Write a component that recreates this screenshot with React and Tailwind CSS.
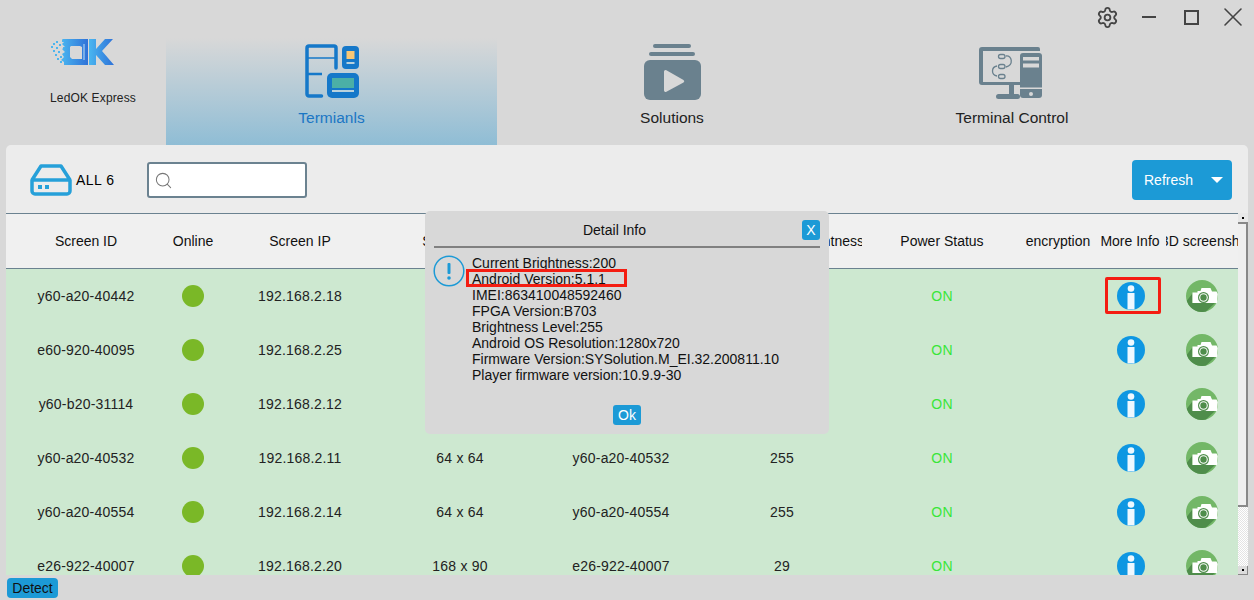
import React from 'react';
import { Settings, Search, X } from 'lucide-react';

const columns = [
  { label: 'Screen ID', width: 'w-[160px]' },
  { label: 'Online', width: 'w-[54px]' },
  { label: 'Screen IP', width: 'w-[160px]' },
  { label: 'Screen Size', width: 'w-[160px]' },
  { label: 'Screen Name', width: 'w-[162px]' },
  { label: 'Screen Brightness', width: 'w-[160px]', className: 'justify-end! pr-0', inner: 'mr-[-2px]' },
  { label: 'Power Status', width: 'w-[160px]' },
  { label: 'encryption', width: 'w-[72px]' },
  { label: 'More Info', width: 'w-[72px]' },
  { label: '3D screenshot', width: 'w-[72px]', inner: 'ml-[8px]' },
];

const rows = [
  { id: 'y60-a20-40442', ip: '192.168.2.18', size: '64 x 64', brightness: '255' },
  { id: 'e60-920-40095', ip: '192.168.2.25', size: '64 x 64', brightness: '255' },
  { id: 'y60-b20-31114', ip: '192.168.2.12', size: '64 x 64', brightness: '255' },
  { id: 'y60-a20-40532', ip: '192.168.2.11', size: '64 x 64', brightness: '255' },
  { id: 'y60-a20-40554', ip: '192.168.2.14', size: '64 x 64', brightness: '255' },
  { id: 'e26-922-40007', ip: '192.168.2.20', size: '168 x 90', brightness: '29' },
];

const details = [
  'Current Brightness:200',
  'Android Version:5.1.1',
  'IMEI:863410048592460',
  'FPGA Version:B703',
  'Brightness Level:255',
  'Android OS Resolution:1280x720',
  'Firmware Version:SYSolution.M_EI.32.200811.10',
  'Player firmware version:10.9.9-30',
];

const LogoIcon = () => (
  <svg width="64" height="26" viewBox="0 0 64 26">
    <defs>
      <linearGradient id="logoFill" x1="0" x2="1" y1="0" y2="0">
        <stop offset="0" stopColor="#4ab6f0" />
        <stop offset="1" stopColor="#2f72d8" />
      </linearGradient>
    </defs>
    {[[1, 7], [3, 4], [3, 11], [6, 2], [6, 8], [5, 15], [8, 12], [9, 5], [7, 19], [10, 17], [10, 22], [13, 20], [14, 24], [12, 1], [13, 8], [15, 13]].map(([x, y], i) => (
      <rect key={i} x={x} y={y} width="2" height="2" fill="#4db5ee" />
    ))}
    <path fillRule="evenodd" d="M12 0h26v26H14v-3l-3-2 3-3-2-3 3-2-3-3 3-2-3-3 2-2zM20 8v10l2 2h10V8l-2-1H21z" fill="url(#logoFill)" />
    <path d="M39 0h7v10l9-10h8L52 12l12 14h-9l-9-10v10h-7z" fill="url(#logoFill)" />
    <path d="M34 5v16" stroke="#bfe0f5" strokeWidth="1" />
  </svg>
);

const TerminalsIcon = () => (
  <svg width="54" height="54" viewBox="0 0 54 54" fill="none">
    <path d="M16.500 52H4a2 2 0 0 1-2-2V4a2 2 0 0 1 2-2h25a2 2 0 0 1 2 2v20" stroke="#1578c9" strokeWidth="3.500" strokeLinecap="round" />
    <path d="M3 14h27" stroke="#1578c9" strokeWidth="1.500" />
    <path d="M3 30h14" stroke="#1578c9" strokeWidth="2.500" />
    <rect x="37" y="2" width="17" height="23" rx="4" fill="#1578c9" />
    <rect x="41.500" y="7" width="8" height="8" fill="#f8c775" />
    <rect x="41.500" y="18" width="8" height="2" fill="#b9d2dd" />
    <rect x="22" y="29" width="32" height="25" rx="5" fill="#1578c9" />
    <rect x="27" y="34" width="22" height="10" fill="#4bafa6" />
    <rect x="27" y="46" width="22" height="2" fill="#b9d2dd" />
  </svg>
);

const SolutionsIcon = () => (
  <svg width="58" height="58" viewBox="0 0 58 58">
    <rect x="10" y="0" width="38" height="4" rx="2" fill="#6a818e" />
    <rect x="6" y="8" width="46" height="4" rx="2" fill="#6a818e" />
    <rect x="1" y="16" width="57" height="40" rx="6" fill="#6a818e" />
    <path d="M21 27.500a1.500 1.500 0 0 1 2.400-1.200L40.500 36a1.500 1.500 0 0 1 0 2.400L23.400 47.700a1.500 1.500 0 0 1-2.400-1.200z" fill="#d8d8d8" />
  </svg>
);

const ControlIcon = () => (
  <svg width="66" height="56" viewBox="0 0 66 56" fill="none">
    <path d="M41 38H4V7h57V5a2 2 0 0 0-2-2H3a3 3 0 0 0-3 3v32a3 3 0 0 0 3 3h38z" fill="#6a818e" />
    <rect x="30" y="41" width="5" height="10" fill="#6a818e" />
    <rect x="17" y="50" width="24" height="5" rx="2.500" fill="#6a818e" />
    <rect x="41" y="9" width="22" height="45" rx="3" fill="#6a818e" />
    <rect x="44" y="13" width="16" height="3.500" fill="#d8d8d8" />
    <rect x="44" y="19.500" width="16" height="4" fill="#d8d8d8" />
    <rect x="40" y="43.500" width="24" height="1.500" fill="#d8d8d8" />
    <circle cx="52" cy="50" r="2" fill="#d8d8d8" />
    <g stroke="#6a818e" strokeWidth="1.300">
      <rect x="19.500" y="10.500" width="6.500" height="4" rx="2" />
      <rect x="19.500" y="20.500" width="6.500" height="4" rx="2" />
      <rect x="19.500" y="30.500" width="6.500" height="4" rx="2" />
      <path d="M27 12c6-1 8 9 0 11M18 22c-6 1-6 9 0 10" />
    </g>
  </svg>
);

const DriveIcon = () => (
  <svg width="43" height="33" viewBox="0 0 43 33" fill="none">
    <path d="M2 16 11 2h20l9 14M2 16h38v11a3 3 0 0 1-3 3H5a3 3 0 0 1-3-3z" stroke="#26a0d9" strokeWidth="3.500" strokeLinejoin="round" />
    <rect x="8" y="21" width="4" height="4" fill="#26a0d9" />
    <rect x="15" y="21" width="4" height="4" fill="#26a0d9" />
  </svg>
);

const InfoDot = () => (
  <svg width="28" height="28" viewBox="0 0 28 28">
    <circle cx="14" cy="14" r="14" fill="#0e97e2" />
    <circle cx="14" cy="6.500" r="3.300" fill="#eef8ff" />
    <rect x="10.500" y="11" width="7" height="16.500" fill="#eef8ff" />
  </svg>
);

const CameraDot = () => (
  <svg width="32" height="32" viewBox="0 0 32 32">
    <circle cx="16" cy="16" r="16" fill="#73b767" />
    <path d="M6 14 0.800 20.800A16 16 0 0 0 20 31.500L29 23H6z" fill="#4f8d4b" />
    <path d="M6.500 12.500h5V11h3l1-3h9l1.500 3.500h4.500L31.800 14 31 23H6.500z" fill="#fff" />
    <circle cx="17.500" cy="17.500" r="5.500" fill="#4f8d4b" />
    <circle cx="17.500" cy="17.500" r="4.300" fill="#fff" />
    <circle cx="17.500" cy="17.500" r="3.200" fill="#4f8d4b" />
  </svg>
);

const NavTab = ({ label, active, width, children }) => (
  <div
    className={`${width} h-[107px] flex flex-col items-center ${active ? 'bg-gradient-to-b from-[#d8d8d8] to-[#8fbdd5] text-[#1b76c4]' : 'text-[#222]'}`}
  >
    <div className="h-[70px] pt-[6px] flex items-start justify-center">{children}</div>
    <span className="text-[15.5px] leading-[20px]">{label}</span>
  </div>
);

const Cell = ({ width, children, className = '' }) => (
  <div className={`${width} shrink-0 h-full flex items-center justify-center overflow-hidden whitespace-nowrap ${className}`}>
    {children}
  </div>
);

const DeviceRow = ({ row }) => (
  <div className="h-[54px] flex text-sm text-[#222] tracking-[0.2px]">
    <Cell width={columns[0].width}>{row.id}</Cell>
    <Cell width={columns[1].width}><span className="w-[22px] h-[22px] rounded-full bg-[#7ab827]" /></Cell>
    <Cell width={columns[2].width}>{row.ip}</Cell>
    <Cell width={columns[3].width}>{row.size}</Cell>
    <Cell width={columns[4].width}>{row.id}</Cell>
    <Cell width={columns[5].width}>{row.brightness}</Cell>
    <Cell width={columns[6].width} className="text-[#39e639]">ON</Cell>
    <Cell width={columns[7].width} />
    <Cell width={columns[8].width} className="pl-px"><InfoDot /></Cell>
    <Cell width={columns[9].width}><CameraDot /></Cell>
  </div>
);

const DetailDialog = () => (
  <div className="absolute left-[419px] top-[66px] w-[404px] h-[223px] rounded-[5px] bg-[#d8d8d8] px-[8px] text-sm text-[#111]">
    <div className="h-[37px] flex items-center justify-center relative border-b-2 border-[#808080] pt-[3px] pr-[25px] mx-px">
      Detail Info
      <span className="absolute right-0 top-[9px] w-[18px] h-[20px] rounded-[3px] bg-[#1c9ad6] text-white flex items-center justify-center">X</span>
    </div>
    <div className="flex mt-[7px]">
      <svg width="32" height="32" viewBox="0 0 32 32" className="shrink-0">
        <circle cx="16" cy="16" r="14.800" fill="none" stroke="#1c9ad6" strokeWidth="1.500" />
        <rect x="14.500" y="8" width="3" height="11" rx="1" fill="#1c9ad6" />
        <circle cx="16" cy="23" r="1.800" fill="#1c9ad6" />
      </svg>
      <div className="ml-[7px] leading-[16px] relative">
        {details.map((line) => (
          <div key={line}>{line}</div>
        ))}
        <span className="absolute left-[-6px] top-[14px] w-[161px] h-[18px] border-[3px] border-[#f41d12]" />
      </div>
    </div>
    <div className="flex justify-center mt-[22px]">
      <span className="w-[28px] h-[20px] rounded-[3px] bg-[#1c9ad6] text-white flex items-center justify-center">Ok</span>
    </div>
  </div>
);

const Scrollbar = () => (
  <div className="w-[10px] h-[362px] mt-[-1px] flex flex-col bg-white bg-[repeating-conic-gradient(#e4e4e4_0_25%,#ffffff_0_50%)] bg-[length:2px_2px]">
    <div className="h-[9px] shrink-0 bg-[#e8e8e8] flex items-center justify-center">
      <span className="w-[2px] h-[2px] bg-black" />
    </div>
    <div className="h-[285px] shrink-0 bg-[#efefef] border-t-2 border-r-2 border-b-2 border-[#888]" />
    <div className="flex-1" />
    <div className="h-[9px] shrink-0 bg-[#dcdcdc] border-r border-b border-[#888] flex items-center justify-center">
      <span className="w-[2px] h-[2px] bg-black" />
    </div>
  </div>
);

export default function App() {
  return (
    <div className="w-[1254px] h-[600px] overflow-hidden flex flex-col bg-[#d8d8d8] font-['Liberation_Sans',Arial,sans-serif]">
      <div className="h-[145px] shrink-0 relative flex items-end">
        <div className="w-[166px] h-[107px] flex flex-col items-start pl-[50px]">
          <div className="h-[26px] mt-px"><LogoIcon /></div>
          <span className="text-xs text-[#222] mt-[25px] whitespace-nowrap tracking-[0.15px]">LedOK Express</span>
        </div>
        <NavTab label="Termianls" active width="w-[331px]"><TerminalsIcon /></NavTab>
        <NavTab label="Solutions" width="w-[350px]"><SolutionsIcon /></NavTab>
        <NavTab label="Terminal Control" width="w-[330px]"><ControlIcon /></NavTab>
        <div className="absolute right-[5px] top-[1px] flex items-center text-[#444]">
          <Settings size={23} strokeWidth={1.900} />
          <span className="ml-[23px] w-[14px] h-[2px] bg-[#444]" />
          <span className="ml-[28px] w-[15px] h-[15px] border-2 border-[#444]" />
          <X size={32} strokeWidth={1.200} className="ml-[18px]" />
        </div>
      </div>

      <div className="h-[430px] shrink-0 mx-[6px] rounded-t-[5px] bg-[#ececec] flex flex-col overflow-hidden relative">
        <div className="h-[69px] shrink-0 flex items-center border-b border-[#6b8290] pt-[2px] pl-[24px] pr-[16px]">
          <DriveIcon />
          <span className="ml-[3px] text-sm text-black tracking-[0.5px]">ALL 6</span>
          <div className="ml-[32px] w-[160px] h-[36px] bg-white border-2 border-[#6b8290] rounded-[3px] flex items-center pl-[5px]">
            <Search size={19} strokeWidth={1.300} className="text-[#777]" />
          </div>
          <div className="ml-auto w-[100px] h-[40px] rounded-[4px] bg-[#1c9ad6] text-white text-sm flex items-center pl-[12px]">
            Refresh
            <span className="ml-[18px] border-x-[6.500px] border-x-transparent border-t-[6.500px] border-t-white" />
          </div>
        </div>

        <div className="flex-1 flex min-h-0">
          <div className="w-[1232px] shrink-0">
            <div className="h-[55px] flex bg-[#f0f0f0] border-b border-[#6b8290] text-sm text-[#111]">
              {columns.map((col) => (
                <Cell key={col.label} width={col.width} className={col.className}>
                  <span className={col.inner}>{col.label}</span>
                </Cell>
              ))}
            </div>
            <div className="bg-[#cde8d0]">
              {rows.map((row) => (
                <DeviceRow key={row.id} row={row} />
              ))}
            </div>
          </div>
          <Scrollbar />
        </div>

        <span className="absolute left-[1099px] top-[132px] w-[56px] h-[37px] border-[3px] border-[#f41d12] rounded-[2px]" />
        <DetailDialog />
      </div>

      <div className="flex-1 pl-[7px] pt-[3px]">
        <span className="block w-[51px] h-[20px] rounded-[4px] bg-[#1c9ad6] text-sm text-[#111] leading-[20px] text-center">Detect</span>
      </div>
    </div>
  );
}
